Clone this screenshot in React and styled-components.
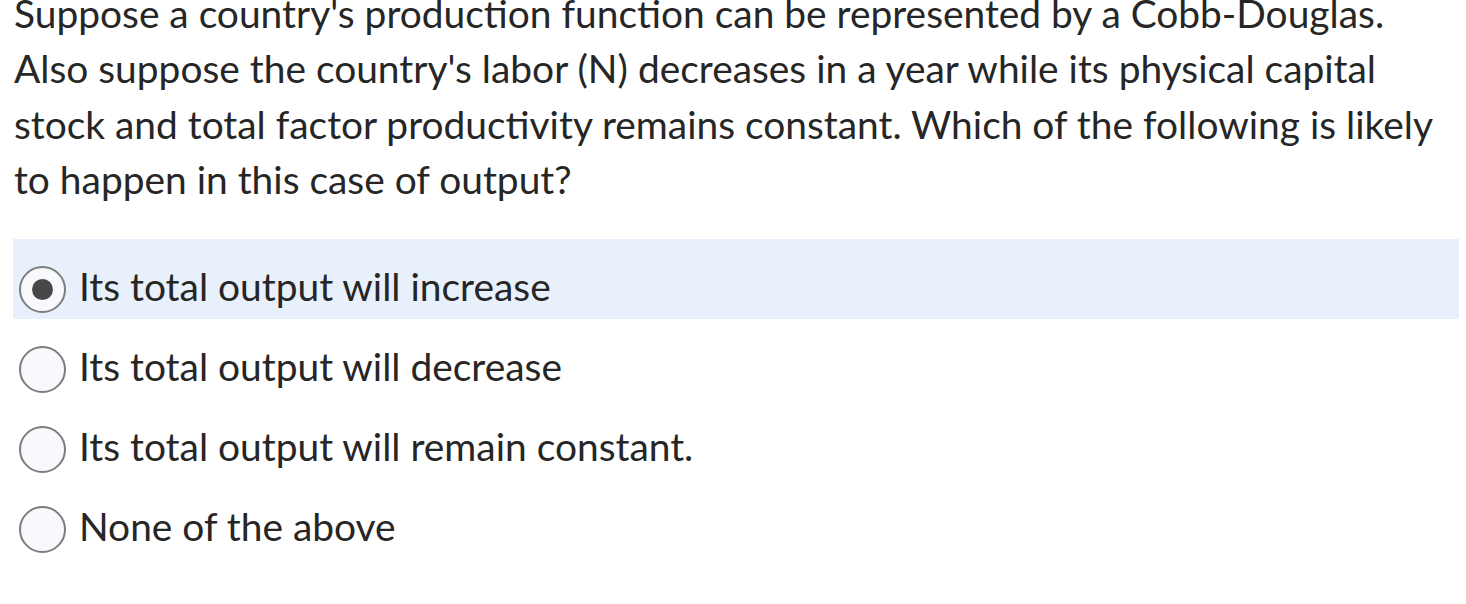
import React from 'react';
import styled, { createGlobalStyle } from 'styled-components';

const GlobalStyle = createGlobalStyle`
  html, body {
    margin: 0;
    padding: 0;
    background: #ffffff;
    overflow: hidden;
  }
  body {
    font-family: Lato, "Open Sans", sans-serif;
    color: #262626;
  }
`;

const Page = styled.div`
  padding: 0 7px 0 13px;
  margin-top: -14px;
`;

const Question = styled.p`
  margin: 0 0 32px 1px;
  font-size: 38.9px;
  line-height: 55.3px;
`;

const Options = styled.div`
  display: flex;
  flex-direction: column;
`;

const Option = styled.label`
  box-sizing: border-box;
  display: flex;
  align-items: center;
  gap: 13px;
  height: 80px;
  padding: 20px 0 0 6px;
  background: ${p => (p.$selected ? '#e8f1fb' : 'transparent')};
  font-size: 38.9px;
`;

const Radio = styled.span`
  box-sizing: border-box;
  width: 47px;
  height: 47px;
  border-radius: 50%;
  border: 2px solid #7d7d7d;
  background: #f7f9fd;
  display: flex;
  align-items: center;
  justify-content: center;
  flex-shrink: 0;

  &::after {
    content: '';
    width: 21px;
    height: 21px;
    border-radius: 50%;
    background: #474747;
    display: ${p => (p.$checked ? 'block' : 'none')};
  }
`;

const OptionText = styled.span`
  line-height: 1;
  margin-bottom: 6px;
`;

const answers = [
  'Its total output will increase',
  'Its total output will decrease',
  'Its total output will remain constant.',
  'None of the above',
];

export default function App() {
  return (
    <Page>
      <GlobalStyle />
      <Question>
        Suppose a country's production function can be represented by a Cobb-Douglas.
        Also suppose the country's labor (N) decreases in a year while its physical capital
        stock and total factor productivity remains constant. Which of the following is likely
        to happen in this case of output?
      </Question>
      <Options>
        {answers.map((a, i) => (
          <Option key={a} $selected={i === 0}>
            <Radio $checked={i === 0} />
            <OptionText>{a}</OptionText>
          </Option>
        ))}
      </Options>
    </Page>
  );
}
